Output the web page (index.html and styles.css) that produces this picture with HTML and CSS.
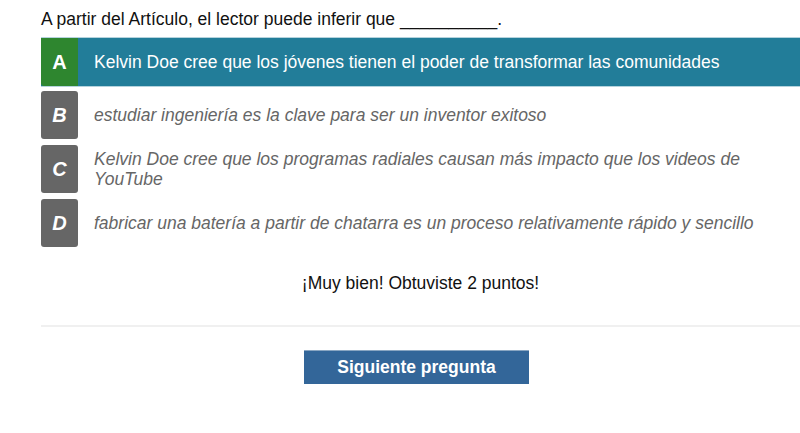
FILE: index.html
```html
<!DOCTYPE html>
<html lang="es">
<head>
<meta charset="utf-8">
<link rel="stylesheet" href="styles.css">
</head>
<body>
<div class="quiz">
  <p class="question">A partir del Artículo, el lector puede inferir que __________.</p>
  <ul class="options">
    <li class="option correct"><span class="letter">A</span><span class="text">Kelvin Doe cree que los jóvenes tienen el poder de transformar las comunidades</span></li>
    <li class="option"><span class="letter">B</span><span class="text">estudiar ingeniería es la clave para ser un inventor exitoso</span></li>
    <li class="option"><span class="letter">C</span><span class="text">Kelvin Doe cree que los programas radiales causan más impacto que los videos de YouTube</span></li>
    <li class="option"><span class="letter">D</span><span class="text">fabricar una batería a partir de chatarra es un proceso relativamente rápido y sencillo</span></li>
  </ul>
  <p class="feedback">¡Muy bien! Obtuviste 2 puntos!</p>
  <hr class="divider">
  <div class="actions"><button class="next">Siguiente pregunta</button></div>
</div>
</body>
</html>
```
FILE: styles.css
```css
html, body { margin: 0; padding: 0; background: #fff; overflow: hidden; }
body { font-family: "Liberation Sans", Arial, sans-serif; font-size: 17.5px; color: #111; }
.quiz { margin-left: 41px; width: calc(100% - 41px); }
.question { margin: 0; padding-top: 9px; height: 28px; line-height: 20px; }
.options { list-style: none; margin: 0; padding: 0; display: flex; flex-direction: column; gap: 6px; }
.option { display: flex; align-items: center; min-height: 48px; }
.option .letter {
  flex: 0 0 37px; align-self: stretch; display: flex; align-items: center; justify-content: center;
  background: #666; color: #fff; font-weight: bold; font-style: italic; font-size: 20px; border-radius: 3px;
}
.option .text { padding: 0 40px 0 16px; color: #666; font-style: italic; line-height: 20px; }
.option.correct { background: #227d99; border-top: 1px solid #b5d3dd; border-bottom: 1px solid #b5d3dd; margin-bottom: -2px; }
.option.correct .letter { background: #2e862f; font-style: normal; border-radius: 0 0 0 3px; }
.option.correct .text { color: #fff; font-style: normal; }
.feedback { margin: 0; padding-top: 26px; text-align: center; line-height: 20px; color: #111; }
.divider { margin: 32px 0 0; border: 0; border-top: 2px solid #f0f0f0; }
.actions { display: flex; justify-content: center; padding-top: 23px; padding-right: 8px; }
.next {
  width: 225px; height: 34px; background: #336699; color: #fff; border: 0; border-top: 1px solid #8aa6c2;
  font-family: "Liberation Sans", Arial, sans-serif; font-weight: bold; font-size: 17.5px; padding: 0; cursor: pointer;
}
```
